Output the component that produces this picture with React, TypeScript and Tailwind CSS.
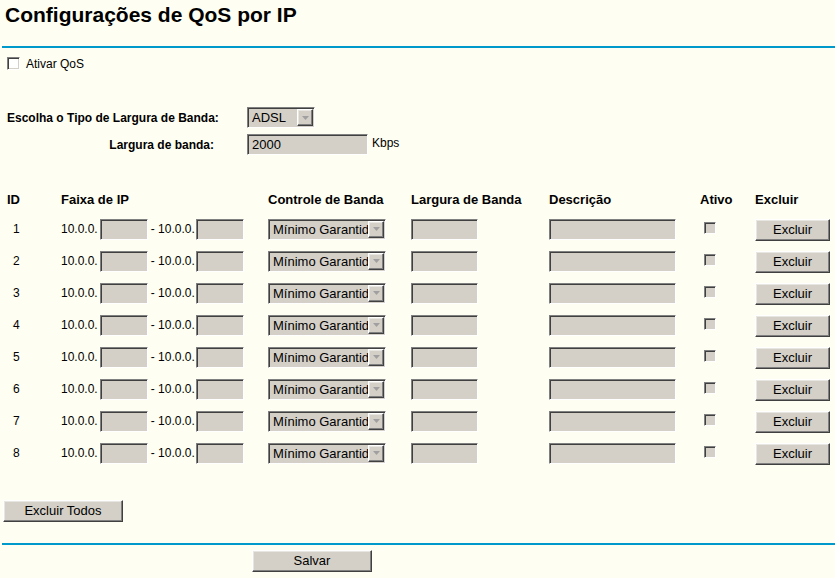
import React from "react";

const sunken =
    "border border-t-[#808080] border-l-[#808080] border-b-white border-r-white shadow-[inset_1px_1px_0_#404040,inset_-1px_-1px_0_#d4d0c8] bg-[#d4d0c8]";

const raised =
    "border border-t-white border-l-white border-b-[#404040] border-r-[#404040] shadow-[inset_-1px_-1px_0_#808080,inset_1px_1px_0_#e8e6e0] bg-[#d4d0c8]";

function Arrow() {
    return (
        <div className={`flex h-full w-[16px] shrink-0 items-center justify-center ${raised}`}>
            <svg width="7" height="4" viewBox="0 0 7 4">
                <path d="M0 0h7L3.5 4z" fill="#a0a0a0" />
            </svg>
        </div>
    );
}

function Select({ value, width }: { value: string; width: string }) {
    return (
        <div className={`flex h-[21px] items-stretch p-[1px] ${sunken} ${width}`}>
            <div className="min-w-0 flex-1 overflow-hidden whitespace-nowrap pl-[3px] text-[13px] leading-[17px]">
                {value}
            </div>
            <Arrow />
        </div>
    );
}

function Field({ width, value }: { width: string; value?: string }) {
    return (
        <div className={`h-[21px] pl-[4px] text-[13px] leading-[19px] ${sunken} ${width}`}>
            {value}
        </div>
    );
}

function Button({ label, width }: { label: string; width: string }) {
    return (
        <div className={`flex h-[22px] items-center justify-center text-[13px] ${raised} ${width}`}>
            {label}
        </div>
    );
}

const rows = [1, 2, 3, 4, 5, 6, 7, 8];

export default function App() {
    return (
        <div className="min-h-screen w-[835px] bg-[#fefef2] font-['Liberation_Sans',Arial,sans-serif] text-black">

            <h1 className="pl-[5px] pt-[3px] text-[21px] font-bold leading-[24px]">
                Configurações de QoS por IP
            </h1>

            <div className="ml-[2px] mt-[19px] h-[2px] bg-[#0099cc]" />

            <div className="ml-[7px] mt-[9px] flex h-[13px] items-center">
                <div className="h-[13px] w-[13px] border border-t-[#808080] border-l-[#808080] border-b-white border-r-white bg-white shadow-[inset_1px_1px_0_#404040,inset_-1px_-1px_0_#d4d0c8]" />
                <span className="ml-[6px] text-[12px]">Ativar QoS</span>
            </div>

            <div className="mt-[37px] flex items-center pl-[7px]">
                <div className="w-[207px] whitespace-nowrap text-right text-[12px] font-bold">
                    Escolha o Tipo de Largura de Banda:
                </div>
                <div className="ml-[33px]">
                    <Select value="ADSL" width="w-[68px]" />
                </div>
            </div>

            <div className="mt-[6px] flex items-center pl-[7px]">
                <div className="w-[207px] whitespace-nowrap text-right text-[12px] font-bold">
                    Largura de banda:
                </div>
                <div className="ml-[33px]">
                    <Field width="w-[121px]" value="2000" />
                </div>
                <span className="mb-[3px] ml-[4px] text-[12px]">Kbps</span>
            </div>

            <div className="mt-[32px] flex h-[26px] items-center whitespace-nowrap pl-[7px] text-[13px] font-bold">
                <div className="w-[54px]">ID</div>
                <div className="w-[207px]">Faixa de IP</div>
                <div className="w-[143px]">Controle de Banda</div>
                <div className="w-[138px]">Largura de Banda</div>
                <div className="w-[151px]">Descrição</div>
                <div className="w-[55px]">Ativo</div>
                <div>Excluir</div>
            </div>

            {rows.map((id) => (
                <div key={id} className="flex h-[32px] items-center whitespace-nowrap pl-[7px] text-[12px]">
                    <div className="w-[54px] pl-[6px]">{id}</div>
                    <div className="flex w-[207px] items-center">
                        <span>10.0.0.</span>
                        <div className="ml-[2px]">
                            <Field width="w-[48px]" />
                        </div>
                        <span className="ml-[3px]">- 10.0.0.</span>
                        <div className="ml-[1px]">
                            <Field width="w-[48px]" />
                        </div>
                    </div>
                    <div className="w-[143px]">
                        <Select value="Mínimo Garantido" width="w-[118px]" />
                    </div>
                    <div className="w-[138px]">
                        <Field width="w-[67px]" />
                    </div>
                    <div className="w-[151px]">
                        <Field width="w-[127px]" />
                    </div>
                    <div className="w-[55px] pl-[4px]">
                        <div className="mb-[2px] h-[12px] w-[12px] border border-t-[#808080] border-l-[#808080] border-b-white border-r-white bg-[#d4d0c8] shadow-[inset_1px_1px_0_#404040,inset_-1px_-1px_0_#d4d0c8]" />
                    </div>
                    <div className="mt-[2px]">
                        <Button label="Excluir" width="w-[75px]" />
                    </div>
                </div>
            ))}

            <div className="ml-[3px] mt-[31px]">
                <Button label="Excluir Todos" width="w-[120px]" />
            </div>

            <div className="ml-[2px] mt-[21px] h-[2px] bg-[#0099cc]" />

            <div className="ml-[252px] mt-[5px]">
                <Button label="Salvar" width="w-[120px]" />
            </div>

        </div>
    );
}
